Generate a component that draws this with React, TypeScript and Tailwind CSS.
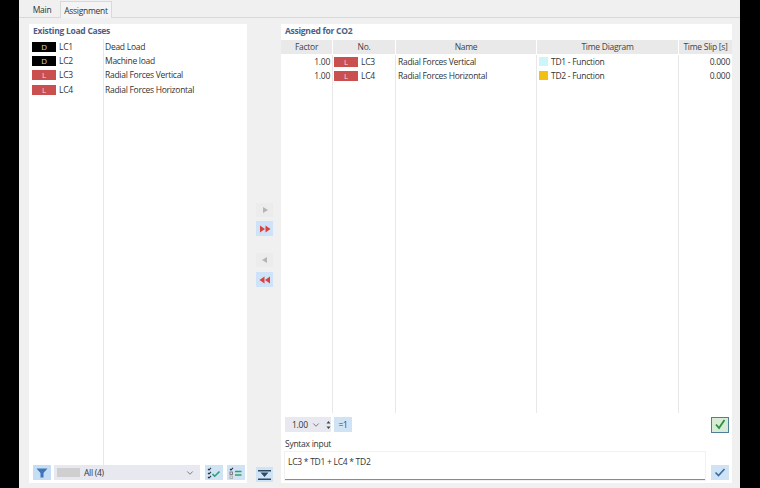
import React from "react";
import { ChevronDown } from "lucide-react";

const existing = [
  { tag: "D", no: "LC1", name: "Dead Load" },
  { tag: "D", no: "LC2", name: "Machine load" },
  { tag: "L", no: "LC3", name: "Radial Forces Vertical" },
  { tag: "L", no: "LC4", name: "Radial Forces Horizontal" },
];

const assigned = [
  { no: "LC3", name: "Radial Forces Vertical", td: "TD1 - Function", swatch: "bg-[#cdf6fa]" },
  { no: "LC4", name: "Radial Forces Horizontal", td: "TD2 - Function", swatch: "bg-[#f2c010]" },
];

function Badge({ tag, className }: { tag: string; className: string }) {
  return (
    <span className={`flex h-[10px] items-center justify-center text-[8px] leading-none ${tag === "D" ? "bg-black text-[#d8d8d8]" : "bg-[#c9504f] text-[#f6d8d8]"} ${className}`}>
      {tag}
    </span>
  );
}

function CheckAll() {
  return (
    <svg width="14" height="12" viewBox="0 0 14 12" fill="none">
      <path d="M1 2l1 1 2-2.200M1 6l1 1 2-2.200" stroke="#27303f" strokeWidth="1.100" />
      <path d="M1 10l1 1 2-2.200" stroke="#27303f" strokeWidth="1.100" />
      <path d="M5.500 7l2.200 2.200L12.500 4.500" stroke="#2f9e6f" strokeWidth="1.600" />
    </svg>
  );
}

function CheckSwap() {
  return (
    <svg width="14" height="12" viewBox="0 0 14 12" fill="none">
      <path d="M1 2l1 1 2-2.200" stroke="#27303f" strokeWidth="1.100" />
      <rect x="1" y="5" width="2.500" height="2.500" stroke="#777" strokeWidth="0.900" />
      <rect x="1" y="9" width="2.500" height="2.500" stroke="#aaa" strokeWidth="0.900" />
      <path d="M6 4.500h6.500M6 8h6.500" stroke="#2f9e6f" strokeWidth="1.400" />
    </svg>
  );
}

function Arrows({ dir, count, color }: { dir: "r" | "l"; count: number; color: string }) {
  return (
    <svg width="12" height="8" viewBox="0 0 12 8" fill={color} className={dir === "l" ? "rotate-180" : ""}>
      {count === 1 ? <path d="M4 1l5 3-5 3z" /> : <><path d="M1 0.500l5 3.500-5 3.500z" /><path d="M6.500 0.500l5 3.500-5 3.500z" /></>}
    </svg>
  );
}

export default function App() {
  return (
    <div className="flex h-[488px] w-[760px] bg-black pl-[19px] pr-[20px] text-[8.5px] leading-[14px] tracking-[-0.27px] text-[#333] [font-family:'Open_Sans',sans-serif]">
      <div className="flex h-full min-w-0 flex-1 flex-col bg-[#f0f0f0]">
        <div className="flex h-[18px] items-end border-b border-[#d9d9d9] pl-[5px]">
          <div className="flex h-[15px] w-[36px] items-center justify-center pt-px">Main</div>
          <div className="-mb-px flex h-[17px] w-[52px] items-center justify-center border border-b-0 border-[#d9d9d9] bg-[#f4f4f4] pt-px">Assignment</div>
        </div>

        <div className="flex min-h-0 flex-1 pl-[10px] pr-[8px] pt-[6px] pb-[5px]">
          {/* left panel */}
          <div className="flex w-[218px] flex-col bg-white">
            <div className="h-[15px] pl-[4px] font-bold text-[#4c6087]">Existing Load Cases</div>
            <div className="relative flex-1 pt-[0.5px]">
              <div className="absolute bottom-0 left-[74px] top-0 w-px bg-[#e6e6e6]" />
              {existing.map((r) => (
                <div key={r.no} className="flex h-[14.4px] items-center pl-[3px]">
                  <Badge tag={r.tag} className="w-[24px]" />
                  <span className="w-[47px] pl-[3px]">{r.no}</span>
                  <span className="pl-[2px]">{r.name}</span>
                </div>
              ))}
            </div>
            <div className="flex h-[18px] items-start gap-[3px] pl-[4px]">
              <button className="flex h-[15px] w-[18px] items-center justify-center bg-[#c5def5]">
                <svg width="12" height="10" viewBox="0 0 12 10"><path d="M0.500 0.500h11L7.500 5v4.500h-3V5z" fill="#3f76b5" /></svg>
              </button>
              <div className="flex h-[15px] w-[146px] items-center bg-[#e8e8f1] pl-[3px]">
                <span className="h-[9px] w-[23px] bg-[#cfcfcf]" />
                <span className="flex-1 pl-[4px]">All (4)</span>
                <ChevronDown size={10} className="mr-[1px] text-[#666]" />
                <span className="w-[4px]" />
              </div>
              <div className="ml-[2px] flex h-[15px] w-[18px] items-center justify-center bg-[#cfe3f5]"><CheckAll /></div>
              <div className="ml-px flex h-[15px] w-[18px] items-center justify-center bg-[#cfe3f5]"><CheckSwap /></div>
            </div>
          </div>

          {/* middle buttons */}
          <div className="flex w-[34px] flex-col items-center pt-[179px] pl-px">
            <div className="flex h-[14px] w-[17px] items-center justify-center bg-[#ececec]"><Arrows dir="r" count={1} color="#b4b4b4" /></div>
            <div className="mt-[4px] flex h-[15px] w-[17px] items-center justify-center bg-[#cfe3f8]"><Arrows dir="r" count={2} color="#d8433f" /></div>
            <div className="mt-[17px] flex h-[14px] w-[17px] items-center justify-center bg-[#ececec]"><Arrows dir="l" count={1} color="#b4b4b4" /></div>
            <div className="mt-[5px] flex h-[15px] w-[17px] items-center justify-center bg-[#cfe3f8]"><Arrows dir="l" count={2} color="#d8433f" /></div>
            <div className="mt-auto flex h-[15px] w-[17px] items-center justify-center bg-[#cfe3f5]">
              <svg width="13" height="10" viewBox="0 0 13 10" fill="#2e4a63"><path d="M0 0h13v1.500H0zM0 8.500h13V10H0zM2.500 2.500h8L6.500 7z" /></svg>
            </div>
            <div className="h-px" />
          </div>

          {/* right panel */}
          <div className="flex w-[451px] flex-col bg-white">
            <div className="h-[16px] pl-[4px] font-bold text-[#4c6087]">Assigned for CO2</div>
            <div className="grid h-[13px] grid-cols-[52px_63px_141px_142px_53px] items-center text-center text-[#444]">
              <div className="mr-px bg-[#e9e9e9]">Factor</div>
              <div className="mr-px bg-[#e9e9e9]">No.</div>
              <div className="mr-px bg-[#e9e9e9]">Name</div>
              <div className="mr-px bg-[#e9e9e9]">Time Diagram</div>
              <div className="bg-[#e9e9e9]">Time Slip [s]</div>
            </div>
            <div className="grid flex-1 grid-cols-[52px_63px_141px_142px_53px] grid-rows-[14px_14px_1fr] pt-[1.5px]">
              {assigned.map((r) => (
                <React.Fragment key={r.no}>
                  <div className="border-r border-[#e8e8e8] pr-[2px] text-right">1.00</div>
                  <div className="flex items-center border-r border-[#e8e8e8] pl-px">
                    <Badge tag="L" className="w-[24px]" />
                    <span className="pl-[3px]">{r.no}</span>
                  </div>
                  <div className="border-r border-[#e8e8e8] pl-[2px]">{r.name}</div>
                  <div className="flex items-center border-r border-[#e8e8e8] pl-[2px]">
                    <span className={`h-[9px] w-[9px] ${r.swatch}`} />
                    <span className="pl-[3px]">{r.td}</span>
                  </div>
                  <div className="pr-[2px] text-right">0.000</div>
                </React.Fragment>
              ))}
              <div className="border-r border-[#e8e8e8]" />
              <div className="border-r border-[#e8e8e8]" />
              <div className="border-r border-[#e8e8e8]" />
              <div className="border-r border-[#e8e8e8]" />
              <div />
            </div>
            <div className="flex h-[70px] flex-col">
              <div className="mt-[4px] flex h-[15px] items-center pl-[4px] pr-[3px]">
                <div className="flex h-[15px] w-[46px] items-center bg-[#e8e8f1] pl-[7px]">
                  <span>1.00</span>
                  <ChevronDown size={10} className="ml-[3px] text-[#666]" />
                  <svg width="5" height="10" viewBox="0 0 5 10" fill="#444" className="ml-[5px]"><path d="M2.500 1l2 2.500h-4zM2.500 9l2-2.500h-4z" /></svg>
                </div>
                <div className="ml-[3px] flex h-[15px] w-[18px] items-center justify-center bg-[#cfe3f5] text-[#2e4a63]">=1</div>
                <div className="ml-auto flex h-[16px] w-[18px] items-center justify-center border border-[#4f7f9a] bg-[#d6ecd4]">
                  <svg width="12" height="11" viewBox="0 0 12 11" fill="none"><path d="M2 5.500L5 9l5.500-8" stroke="#2f8f3f" strokeWidth="1.800" /></svg>
                </div>
              </div>
              <div className="mt-[5px] h-[14px] pl-[4px]">Syntax input</div>
              <div className="flex flex-1 items-end pb-[3px] pl-[4px] pr-[3px]">
                <div className="h-[28px] w-[420px] border-b border-[#8a8a8a] bg-white pl-[3px] pt-[3px] shadow-[0_0_0_1px_#f1f1f1]">LC3 * TD1 + LC4 * TD2</div>
                <div className="ml-auto flex h-[15px] w-[18px] items-center justify-center bg-[#cfe3f5]">
                  <svg width="12" height="9" viewBox="0 0 12 9" fill="none"><path d="M1.500 4.500L4.500 7.500 10.500 1" stroke="#3c6ea5" strokeWidth="1.700" /></svg>
                </div>
              </div>
            </div>
          </div>
        </div>
      </div>
    </div>
  );
}
